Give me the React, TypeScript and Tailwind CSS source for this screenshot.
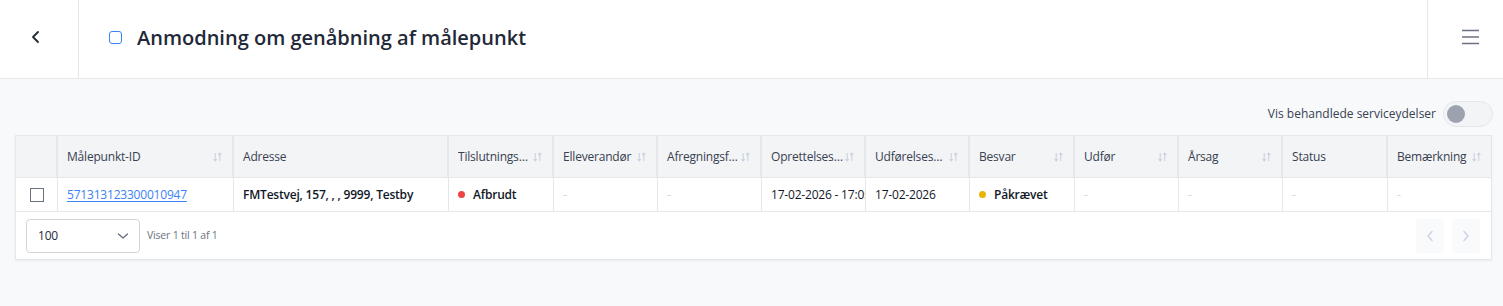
import React from "react";

const SortIcon = () => (
  <svg width="9" height="10" viewBox="0 0 9 10" fill="none" stroke="#cbd2dc" strokeWidth="1.1" className="shrink-0">
    <path d="M2.2 1v8M0.6 7.2 2.2 9l1.6-1.8" />
    <path d="M6.8 9V1M5.2 2.8 6.8 1l1.6 1.8" />
  </svg>
);

type Col = { w: number; label: string; sort: boolean };

const cols: Col[] = [
  { w: 42, label: "", sort: false },
  { w: 176, label: "Målepunkt-ID", sort: true },
  { w: 215, label: "Adresse", sort: false },
  { w: 105, label: "Tilslutningsstatus", sort: true },
  { w: 104, label: "Elleverandør", sort: true },
  { w: 104, label: "Afregningsform", sort: true },
  { w: 104, label: "Oprettelsesdato", sort: true },
  { w: 104, label: "Udførelsesdato", sort: true },
  { w: 105, label: "Besvar", sort: true },
  { w: 104, label: "Udfør", sort: true },
  { w: 104, label: "Årsag", sort: true },
  { w: 105, label: "Status", sort: false },
  { w: 103, label: "Bemærkning", sort: true },
];

const Dash = () => <span className="text-[#d1d5db]">-</span>;

export default function App() {
  const body: React.ReactNode[] = [
    <div className="flex w-full justify-center">
      <div className="h-[14px] w-[14px] border border-[#6b7280] bg-white" />
    </div>,
    <a className="text-[#3b82f6] underline underline-offset-2">571313123300010947</a>,
    <span className="font-semibold text-[#111827]">FMTestvej, 157, , , 9999, Testby</span>,
    <span className="flex items-center gap-[8px] font-semibold text-[#111827]">
      <span className="h-[7px] w-[7px] rounded-full bg-[#ef4444]" />
      Afbrudt
    </span>,
    <Dash />,
    <Dash />,
    <span className="whitespace-nowrap font-medium text-[#111827]">17-02-2026 - 17:05</span>,
    <span className="whitespace-nowrap font-medium text-[#111827]">17-02-2026</span>,
    <span className="flex items-center gap-[8px] font-semibold text-[#111827]">
      <span className="h-[7px] w-[7px] rounded-full bg-[#eab308]" />
      Påkrævet
    </span>,
    <Dash />,
    <Dash />,
    <Dash />,
    <Dash />,
  ];

  return (
    <div className="min-h-screen bg-[#f8f9fa] font-['Open_Sans',sans-serif] text-[#1f2937]">
      <header className="flex h-[79px] border-b border-[#e5e7eb] bg-white">
        <div className="flex w-[79px] items-center justify-center border-r border-[#e5e7eb] pb-[5px] pr-[6px]">
          <svg width="12" height="14" viewBox="0 0 12 14" fill="none" stroke="#1f2937" strokeWidth="1.8" strokeLinecap="round" strokeLinejoin="round">
            <path d="M8 2 3 7l5 5" />
          </svg>
        </div>
        <div className="flex flex-1 items-center gap-[15px] pb-[3px] pl-[30px]">
          <div className="h-[13px] w-[13px] rounded-[3px] border border-[#3b82f6] bg-white" />
          <h1 className="text-[20px] font-semibold leading-none text-[#1f2937]">Anmodning om genåbning af målepunkt</h1>
        </div>
        <div className="flex w-[76px] items-center justify-center border-l border-[#e5e7eb] pb-[4px] pl-[10px]">
          <svg width="17" height="16" viewBox="0 0 17 16" fill="none" stroke="#6b7280" strokeWidth="1.5">
            <path d="M0 1.5h17M0 8h17M0 14.5h17" />
          </svg>
        </div>
      </header>

      <div className="pl-[15px] pr-[11px] pt-[22px]">
        <div className="flex items-center justify-end gap-[7px]">
          <span className="text-[12px] text-[#374151]">Vis behandlede serviceydelser</span>
          <div className="mr-[-1px] flex h-[26px] w-[50px] items-center rounded-full border border-[#e5e7eb] bg-[#f3f4f6] px-[3px]">
            <div className="h-[18px] w-[18px] rounded-full bg-[#9ca3af]" />
          </div>
        </div>

        <div className="mt-[8px] border border-[#e5e7eb] bg-white tracking-[-0.2px] shadow-[0_1px_2px_rgba(0,0,0,0.06)]">
          <div className="flex h-[42px] border-b border-[#e5e7eb] bg-[#f3f4f6]">
            {cols.map((c, i) => (
              <div
                key={i}
                style={{ width: c.w }}
                className={`flex shrink-0 items-center gap-[2px] overflow-hidden pl-[9px] pr-[10px] text-[12px] text-[#374151] ${i < cols.length - 1 ? "border-r-2 border-[#e5e7eb]" : ""}`}
              >
                <span className="min-w-0 flex-1 truncate">{c.label}</span>
                {c.sort && <SortIcon />}
              </div>
            ))}
          </div>
          <div className="flex h-[34px] border-b border-[#e5e7eb]">
            {cols.map((c, i) => (
              <div
                key={i}
                style={{ width: c.w }}
                className={`flex shrink-0 items-center overflow-hidden text-[12px] ${i === 0 ? "" : "pl-[9px]"} ${i < cols.length - 1 ? "border-r border-[#e5e7eb]" : ""}`}
              >
                {body[i]}
              </div>
            ))}
          </div>
          <div className="flex h-[47px] items-center px-[10px]">
            <div className="flex h-[34px] w-[114px] items-center justify-between rounded-[4px] border border-[#d1d5db] pl-[11px] pr-[10px]">
              <span className="text-[12px] text-[#1f2937]">100</span>
              <svg width="12" height="8" viewBox="0 0 12 8" fill="none" stroke="#6b7280" strokeWidth="1.4" strokeLinecap="round" strokeLinejoin="round">
                <path d="M1.5 2 6 6l4.5-4" />
              </svg>
            </div>
            <span className="ml-[7px] text-[10.5px] text-[#6b7280]">Viser 1 til 1 af 1</span>
            <div className="ml-auto flex gap-[8px] pr-[1px]">
              <div className="flex h-[34px] w-[28px] items-center justify-center rounded-[4px] bg-[#f8fafc]">
                <svg width="8" height="12" viewBox="0 0 8 12" fill="none" stroke="#c7d2e0" strokeWidth="1.3" strokeLinecap="round" strokeLinejoin="round">
                  <path d="M6 1.5 2 6l4 4.5" />
                </svg>
              </div>
              <div className="flex h-[34px] w-[28px] items-center justify-center rounded-[4px] bg-[#f8fafc]">
                <svg width="8" height="12" viewBox="0 0 8 12" fill="none" stroke="#c7d2e0" strokeWidth="1.3" strokeLinecap="round" strokeLinejoin="round">
                  <path d="M2 1.5 6 6l-4 4.5" />
                </svg>
              </div>
            </div>
          </div>
        </div>
      </div>
    </div>
  );
}
